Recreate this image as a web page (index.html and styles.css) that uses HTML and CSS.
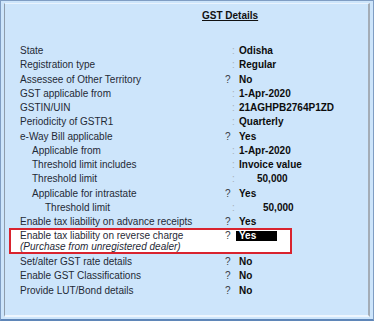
FILE: index.html
```html
<!DOCTYPE html>
<html>
<head>
<meta charset="utf-8">
<link rel="stylesheet" href="styles.css">
</head>
<body>
<div class="screen">
  <div class="panel">
    <div class="title-row"><span class="title">GST Details</span></div>
    <div class="rows">
      <div class="row"><span class="label">State</span><span class="sep colon">:</span><span class="val">Odisha</span></div>
      <div class="row"><span class="label">Registration type</span><span class="sep colon">:</span><span class="val">Regular</span></div>
      <div class="row"><span class="label">Assessee of Other Territory</span><span class="sep q">?</span><span class="val">No</span></div>
      <div class="row"><span class="label">GST applicable from</span><span class="sep colon">:</span><span class="val">1-Apr-2020</span></div>
      <div class="row"><span class="label">GSTIN/UIN</span><span class="sep colon">:</span><span class="val">21AGHPB2764P1ZD</span></div>
      <div class="row"><span class="label">Periodicity of GSTR1</span><span class="sep colon">:</span><span class="val">Quarterly</span></div>
      <div class="row"><span class="label">e-Way Bill applicable</span><span class="sep q">?</span><span class="val">Yes</span></div>
      <div class="row"><span class="label ind1">Applicable from</span><span class="sep colon">:</span><span class="val">1-Apr-2020</span></div>
      <div class="row"><span class="label ind1">Threshold limit includes</span><span class="sep colon">:</span><span class="val">Invoice value</span></div>
      <div class="row"><span class="label ind1">Threshold limit</span><span class="sep colon">:</span><span class="val amt1">50,000</span></div>
      <div class="row"><span class="label ind1">Applicable for intrastate</span><span class="sep q">?</span><span class="val">Yes</span></div>
      <div class="row"><span class="label ind2">Threshold limit</span><span class="sep colon">:</span><span class="val amt2">50,000</span></div>
      <div class="row"><span class="label">Enable tax liability on advance receipts</span><span class="sep q">?</span><span class="val">Yes</span></div>
      <div class="redbox">
        <div class="row row-tight"><span class="label">Enable tax liability on reverse charge</span><span class="sep q">?</span><span class="val"><span class="hl">Yes</span></span></div>
        <div class="row row-sub"><span class="label italic">(Purchase from unregistered dealer)</span></div>
      </div>
      <div class="row after-box"><span class="label">Set/alter GST rate details</span><span class="sep q">?</span><span class="val">No</span></div>
      <div class="row"><span class="label">Enable GST Classifications</span><span class="sep q">?</span><span class="val">No</span></div>
      <div class="row"><span class="label">Provide LUT/Bond details</span><span class="sep q">?</span><span class="val">No</span></div>
    </div>
  </div>
</div>
</body>
</html>
```

FILE: styles.css
```css
html, body {
  margin: 0;
  padding: 0;
}
body {
  width: 374px;
  height: 321px;
  overflow: hidden;
  font-family: "Liberation Sans", Arial, sans-serif;
  font-size: 10px;
  color: #1f2a36;
}
.screen {
  width: 374px;
  height: 321px;
  box-sizing: border-box;
  background: #cde5fb;
  border: 1px solid #7f9dc3;
  border-bottom: 2px solid #5f86b8;
  padding: 2px 3px 2px 3px;
}
.panel {
  box-sizing: border-box;
  height: 314px;
  border-left: 1px solid #8e9cab;
  border-top: 1px solid #e9f3fd;
  border-right: 2px solid #a3acb6;
  border-bottom: 2px solid #eef6fe;
  padding-left: 15px;
}
.title-row {
  margin-top: 5px;
  height: 14px;
  line-height: 14px;
  padding-left: 182px;
}
.title {
  font-weight: bold;
  text-decoration: underline;
  color: #111;
}
.rows {
  margin-top: 21px;
}
.row {
  display: grid;
  grid-template-columns: 204px 15px 1fr;
  line-height: 14.25px;
  height: 14.25px;
  white-space: nowrap;
}
.label.ind1 { padding-left: 12px; }
.label.ind2 { padding-left: 25px; }
.italic { font-style: italic; }
.sep.q {
  color: #3a3f46;
  padding-left: 1px;
}
.sep.colon {
  color: #a8b0ba;
  padding-left: 8px;
}
.val {
  font-weight: bold;
  color: #0c0c0c;
}
.amt1 { padding-left: 18px; }
.amt2 { padding-left: 24px; }
.redbox {
  box-sizing: border-box;
  width: 283px;
  margin-left: -11px;
  margin-top: -1.25px;
  border: 2px solid #d9232e;
  padding-left: 9px;
  background: #ffffff;
}
.redbox .row {
  grid-template-columns: 204px 15px 1fr;
}
.row-tight {
  height: 12px;
  line-height: 12px;
}
.row-sub {
  height: 10px;
  line-height: 10px;
}
.hl {
  display: inline-block;
  background: #000;
  color: #fff;
  margin-left: -3px;
  padding-left: 3px;
  width: 38px;
  height: 10px;
  line-height: 10px;
  margin-top: 1px;
  vertical-align: top;
}
.after-box {
  margin-top: 1px;
}
```
